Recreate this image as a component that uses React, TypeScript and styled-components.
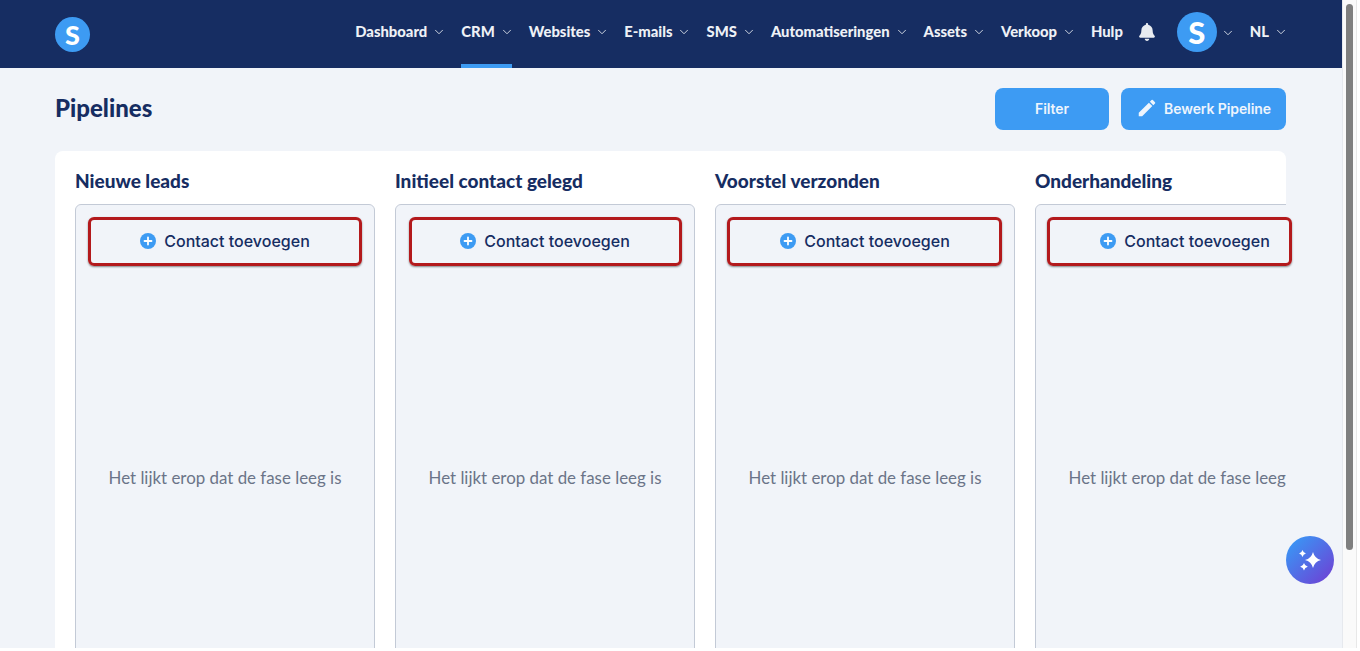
import React from "react";
import styled, { createGlobalStyle } from "styled-components";
import { ChevronDown } from "lucide-react";
import { MdEdit } from "react-icons/md";
import { FaBell } from "react-icons/fa";

const GlobalStyle = createGlobalStyle`
	html, body {
		margin: 0;
		padding: 0;
		background: #ffffff;
		overflow: hidden;
	}
`;

const Shell = styled.div`
	position: relative;
	display: flex;
	width: 1357px;
	height: 648px;
	overflow: hidden;
	font-family: "Inter", "Liberation Sans", sans-serif;
`;

const Page = styled.div`
	width: 1342px;
	height: 648px;
	flex: none;
	background: #f1f4f9;
	border-right: 1px solid #e6e9ee;
	overflow: hidden;
`;

const ScrollTrack = styled.div`
	flex: 1;
	background: #fafafa;
	border-right: 1px solid #e8e8e8;
	padding: 4px 3px 0 3px;
`;

const ScrollThumb = styled.div`
	height: 546px;
	background: #7f7f7f;
	border-radius: 4px;
`;

const Header = styled.header`
	height: 68px;
	background: #162d62;
	display: flex;
	align-items: center;
	padding: 0 56px 0 55px;
`;

const Logo = styled.div<{ $size: number; $font: number }>`
	width: ${(p) => p.$size}px;
	height: ${(p) => p.$size}px;
	flex: none;
	border-radius: 50%;
	background: #3d9bf3;
	color: #ffffff;
	display: flex;
	align-items: center;
	justify-content: center;
	font-family: "Lato", sans-serif;
	font-weight: 900;
	font-size: ${(p) => p.$font}px;
	line-height: 1;
`;

const Nav = styled.nav`
	margin-left: auto;
	height: 100%;
	display: flex;
	align-items: center;
	gap: 17px;
`;

const NavItem = styled.div<{ $active?: boolean }>`
	height: 100%;
	display: flex;
	align-items: center;
	gap: 7px;
	padding-top: 4px;
	padding-bottom: 6px;
	box-sizing: border-box;
	color: #eef1f6;
	font-family: "Lato", sans-serif;
	font-weight: 900;
	font-size: 14.8px;
	border-bottom: 4px solid ${(p) => (p.$active ? "#3d9bf3" : "transparent")};
`;

const Chevron = styled(ChevronDown)`
	width: 14px;
	height: 14px;
	margin: 1px -2px 0;
	color: #e4e8ef;
	stroke-width: 1.5;
`;

const BellWrap = styled.div`
	display: flex;
	margin: -5px 2px 0 -2px;
	color: #e9ecf1;
	font-size: 18px;
`;

const UserItem = styled.div`
	display: flex;
	align-items: center;
	gap: 6px;
	margin-top: -4px;
	margin-left: 2px;
`;

const Content = styled.main`
	padding: 20px 56px 0 55px;
`;

const TitleRow = styled.div`
	display: flex;
	align-items: center;
	gap: 12px;
	height: 42px;
`;

const Title = styled.h1`
	margin: -4px auto 0 0;
	color: #162d62;
	font-family: "Lato", sans-serif;
	font-weight: 900;
	font-size: 24px;
`;

const ActionButton = styled.button<{ $width: number }>`
	width: ${(p) => p.$width}px;
	height: 42px;
	border: 0;
	border-radius: 8px;
	background: #3d9bf3;
	color: #eef5fd;
	display: flex;
	align-items: center;
	justify-content: center;
	gap: 6px;
	padding: 0 0 2px;
	font-family: "Inter", sans-serif;
	font-weight: 600;
	font-size: 14px;
	letter-spacing: -0.1px;
	svg {
		font-size: 22px;
	}
`;

const Board = styled.section`
	margin-top: 21px;
	height: 497px;
	padding: 20px 0 0 20px;
	box-sizing: border-box;
	background: #ffffff;
	border-radius: 8px 8px 0 0;
	display: flex;
	gap: 20px;
	overflow: hidden;
`;

const Column = styled.div`
	width: 300px;
	flex: none;
	display: flex;
	flex-direction: column;
`;

const ColumnTitle = styled.h2`
	margin: 0 0 13px;
	height: 20px;
	color: #162d62;
	font-family: "Lato", sans-serif;
	font-weight: 900;
	font-size: 19px;
	line-height: 20px;
	white-space: nowrap;
`;

const Stage = styled.div`
	height: 500px;
	box-sizing: border-box;
	border: 1px solid #c3cad6;
	border-radius: 6px;
	background: #f1f4f9;
	display: flex;
	flex-direction: column;
`;

const AddContact = styled.button`
	height: 72px;
	border: 0;
	background: transparent;
	padding: 0;
	display: flex;
	align-items: center;
	justify-content: center;
	gap: 8px;
	color: #162d62;
	font-family: "Inter", sans-serif;
	font-weight: 500;
	font-size: 16px;
	flex: none;
`;

const EmptyNote = styled.div`
	height: 400px;
	display: flex;
	align-items: center;
	justify-content: center;
	color: #6b7488;
	font-family: "Lato", sans-serif;
	font-size: 16.9px;
	white-space: nowrap;
`;

// the red frames are markup on top of the screenshot, they don't clip with the board
const RedFrame = styled.div<{ $x: number; $w: number }>`
	position: absolute;
	top: 217px;
	left: ${(p) => p.$x}px;
	width: ${(p) => p.$w}px;
	height: 49px;
	box-sizing: border-box;
	border: 3px solid #b3191c;
	border-radius: 6px;
	box-shadow: 0 1px 2px rgba(0, 0, 0, 0.45);
`;

const AssistantButton = styled.button`
	position: absolute;
	left: 1286px;
	top: 536px;
	width: 48px;
	height: 48px;
	border: 0;
	padding: 0;
	border-radius: 50%;
	background: linear-gradient(135deg, #3a96f5 10%, #6b45d6 90%);
	display: flex;
`;

const PlusIcon = () => (
	<svg width="16" height="16" viewBox="0 0 16 16">
		<circle cx="8" cy="8" r="8" fill="#3d9bf3" />
		<path d="M8 4.5v7M4.5 8h7" stroke="#fff" strokeWidth="1.8" strokeLinecap="round" />
	</svg>
);

const star = (cx: number, cy: number, r: number) => {
	const k = r * 0.2;
	return `M${cx} ${cy - r}Q${cx + k} ${cy - k} ${cx + r} ${cy}Q${cx + k} ${cy + k} ${cx} ${cy + r}Q${cx - k} ${cy + k} ${cx - r} ${cy}Q${cx - k} ${cy - k} ${cx} ${cy - r}Z`;
};

const SparkleIcon = () => (
	<svg width="48" height="48" viewBox="0 0 48 48" fill="#fff">
		<path d={star(27, 24, 8)} />
		<path d={star(16.5, 17.5, 3.4)} />
		<path d={star(18, 30.7, 3.8)} />
	</svg>
);

const navItems = ["Dashboard", "CRM", "Websites", "E-mails", "SMS", "Automatiseringen", "Assets", "Verkoop"];
const stages = ["Nieuwe leads", "Initieel contact gelegd", "Voorstel verzonden", "Onderhandeling"];
const frames = [
	{ x: 88, w: 274 },
	{ x: 409, w: 273 },
	{ x: 727, w: 275 },
	{ x: 1047, w: 245 },
];

export default function App() {
	return (
		<>
			<GlobalStyle />
			<Shell>
				<Page>
					<Header>
						<Logo $size={35} $font={27}>S</Logo>
						<Nav>
							{navItems.map((item) => (
								<NavItem key={item} $active={item === "CRM"}>
									{item}
									<Chevron />
								</NavItem>
							))}
							<NavItem>Hulp</NavItem>
							<BellWrap>
								<FaBell />
							</BellWrap>
							<UserItem>
								<Logo $size={40} $font={31}>S</Logo>
								<Chevron />
							</UserItem>
							<NavItem>
								NL
								<Chevron />
							</NavItem>
						</Nav>
					</Header>
					<Content>
						<TitleRow>
							<Title>Pipelines</Title>
							<ActionButton $width={114}>Filter</ActionButton>
							<ActionButton $width={165}>
								<MdEdit />
								Bewerk Pipeline
							</ActionButton>
						</TitleRow>
						<Board>
							{stages.map((stage) => (
								<Column key={stage}>
									<ColumnTitle>{stage}</ColumnTitle>
									<Stage>
										<AddContact>
											<PlusIcon />
											Contact toevoegen
										</AddContact>
										<EmptyNote>Het lijkt erop dat de fase leeg is</EmptyNote>
									</Stage>
								</Column>
							))}
						</Board>
					</Content>
				</Page>
				<ScrollTrack>
					<ScrollThumb />
				</ScrollTrack>
				{frames.map((f) => (
					<RedFrame key={f.x} $x={f.x} $w={f.w} />
				))}
				<AssistantButton>
					<SparkleIcon />
				</AssistantButton>
			</Shell>
		</>
	);
}
